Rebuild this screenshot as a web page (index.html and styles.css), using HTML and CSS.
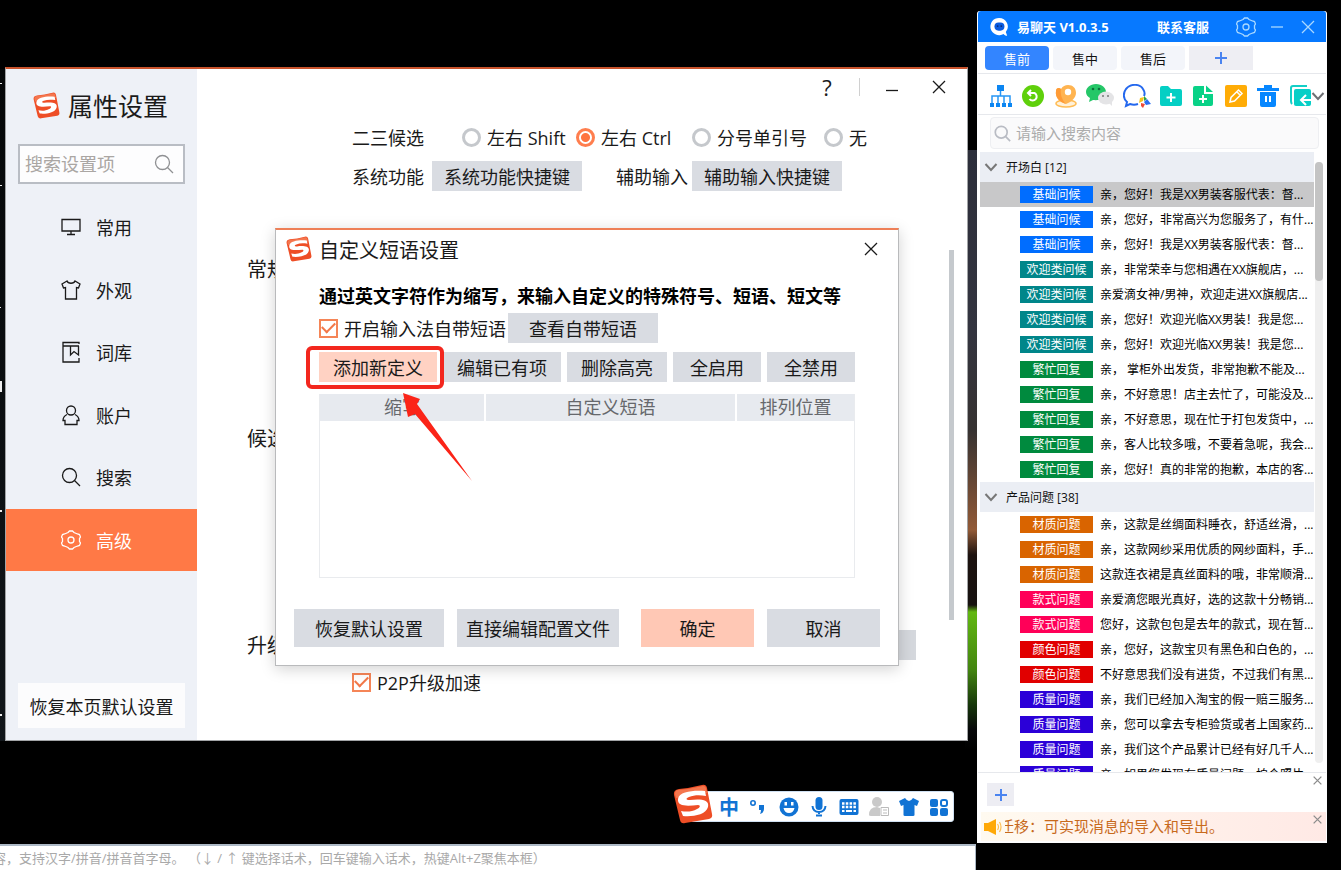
FILE: index.html
```html
<!DOCTYPE html>
<html lang="zh-CN">
<head>
<meta charset="utf-8">
<title>属性设置</title>
<link rel="stylesheet" href="styles.css">
</head>
<body>
<svg class="defs" aria-hidden="true">
  <symbol id="s-logo" viewBox="0 0 40 40">
    <path d="M6 5 Q17 4 29 1 Q33 0 34 4 L39 30 Q40 34 36 35 L12 39 Q8 40 7 36 L1 11 Q0 6 6 5Z" fill="#ee4e26"/>
    <path d="M5 6 Q17 5 30 2 Q33 2 33 5 L34 9 Q20 10 3 14 L2 10 Q2 6 5 6Z" fill="#f4764e"/>
    <path d="M32 7C22 6 6 7 5 15C4 23 15 22 25 21C28 21 27 24 24 25C19 28 13 28 8 27L10 32C19 33 33 31 35 23C37 15 26 15 17 16C12 16 13 14 16 13C21 11 27 11 33 12Z" fill="#fff"/>
  </symbol>
  <symbol id="i-search" viewBox="0 0 20 20"><circle cx="8.500" cy="8.500" r="7"/><path d="M13.500 13.500 19 19"/></symbol>
  <symbol id="i-close" viewBox="0 0 14 14"><path d="M1 1 13 13M13 1 1 13"/></symbol>
  <symbol id="i-hex" viewBox="0 0 20 20"><path d="M7 2.500 8.500 1H11.500L13 2.500 16.500 4 18.500 4.500 19.500 7 18.500 8.500V11.500L19.500 13 18.500 15.500 16.500 16 13 17.500 11.500 19H8.500L7 17.500 3.500 16 1.500 15.500.5 13 1.500 11.500V8.500L.5 7 1.500 4.500 3.500 4Z"/><circle cx="10" cy="10" r="3"/></symbol>
  <symbol id="i-plus" viewBox="0 0 14 14"><path d="M7 1V13M1 7H13"/></symbol>
  <symbol id="i-down" viewBox="0 0 14 14"><path d="M1.500 4 7 10 12.500 4"/></symbol>
</svg>

<main class="desktop">
  <div class="wallpaper-strip"></div>
  <div class="edge-marks" aria-hidden="true"><i></i><i></i><i></i><i></i><i></i><i></i></div>

  <section class="settings" aria-label="属性设置">
    <aside class="sidebar">
      <h1 class="brand"><svg class="brand-logo"><use href="#s-logo"/></svg>属性设置</h1>
      <label class="side-search">
        <input type="text" placeholder="搜索设置项" aria-label="搜索设置项">
        <svg class="line"><use href="#i-search"/></svg>
      </label>
      <nav class="side-nav">
        <button class="nav-item"><svg class="line" viewBox="0 0 20 20"><path d="M1 2.500H19V14H1ZM10 14V17.500M6 17.500H14"/></svg>常用</button>
        <button class="nav-item"><svg class="line" viewBox="0 0 20 20"><path d="M6 1 1 4 2.500 8 4.500 7.500V19H15.500V7.500L17.500 8 19 4 14 1C13 4 7 4 6 1Z"/></svg>外观</button>
        <button class="nav-item"><svg class="line" viewBox="0 0 20 20"><path d="M18 2V0.500H2V20H18V16M2 4H18M9.500 4V13L13 9.500 17.500 13V4"/></svg>词库</button>
        <button class="nav-item"><svg class="line" viewBox="0 0 20 20"><circle cx="10" cy="5.500" r="4.500"/><path d="M6 9.500C3 11 2 13 2 15.500H4V19.500H16V15.500H18C18 13 17 11 14 9.500"/></svg>账户</button>
        <button class="nav-item"><svg class="line"><use href="#i-search"/></svg>搜索</button>
        <button class="nav-item is-active"><svg class="line"><use href="#i-hex"/></svg>高级</button>
      </nav>
      <button class="restore-page">恢复本页默认设置</button>
    </aside>

    <div class="settings-main">
      <header class="window-tools">
        <button aria-label="帮助" class="help">?</button>
        <span class="tool-sep"></span>
        <button aria-label="最小化"><svg class="line icon-14" viewBox="0 0 14 14"><path d="M1 10.500H13"/></svg></button>
        <button aria-label="关闭"><svg class="line icon-14"><use href="#i-close"/></svg></button>
      </header>
      <div class="settings-body">
        <section class="group group-keys">
          <div></div>
          <div class="fields">
            <div class="radio-row" role="radiogroup" aria-label="二三候选">
              <span>二三候选</span>
              <label><input type="radio" name="cand">左右 Shift</label>
              <label><input type="radio" name="cand" checked>左右 Ctrl</label>
              <label><input type="radio" name="cand">分号单引号</label>
              <label><input type="radio" name="cand">无</label>
            </div>
            <div class="shortcut-row">
              <span>系统功能</span><button class="btn">系统功能快捷键</button>
              <span class="second">辅助输入</span><button class="btn">辅助输入快捷键</button>
            </div>
          </div>
        </section>
        <section class="group group-general"><h2>常规</h2></section>
        <section class="group group-cand"><h2>候选</h2></section>
        <section class="group">
          <h2>升级</h2>
          <div class="fields">
            <span class="covered-control"></span>
            <label class="check"><input type="checkbox" checked>P2P升级加速</label>
          </div>
        </section>
      </div>
      <span class="settings-scroll"></span>
    </div>
  </section>

  <section class="dialog" role="dialog" aria-label="自定义短语设置">
    <header class="dialog-head">
      <svg class="dialog-logo"><use href="#s-logo"/></svg>
      <h2>自定义短语设置</h2>
      <button aria-label="关闭"><svg class="line icon-14"><use href="#i-close"/></svg></button>
    </header>
    <div class="dialog-body">
      <p>通过英文字符作为缩写，来输入自定义的特殊符号、短语、短文等</p>
      <div class="enable-row">
        <label class="check"><input type="checkbox" checked>开启输入法自带短语</label>
        <button class="btn">查看自带短语</button>
      </div>
      <div class="action-row">
        <button class="btn btn-add">添加新定义</button>
        <button class="btn">编辑已有项</button>
        <button class="btn">删除高亮</button>
        <button class="btn">全启用</button>
        <button class="btn">全禁用</button>
      </div>
      <div class="table-box">
        <table>
          <thead><tr><th class="col-abbr">缩写</th><th>自定义短语</th><th class="col-pos">排列位置</th></tr></thead>
        </table>
      </div>
    </div>
    <footer class="dialog-foot">
      <button class="btn btn-wide">恢复默认设置</button>
      <button class="btn">直接编辑配置文件</button>
      <button class="btn btn-primary">确定</button>
      <button class="btn btn-short">取消</button>
    </footer>
    <span class="mark-frame"></span>
    <svg class="mark-arrow" viewBox="0 0 74 94" aria-hidden="true"><path d="M3 3 20 9 17 14 72 91 15 24 8 27Z" fill="#fb2418"/></svg>
  </section>

  <section class="chat" aria-label="易聊天">
    <header class="chat-title">
      <svg class="chat-logo" viewBox="0 0 22 22"><path d="M11 1a9.500 9.500 0 1 0 5 17.600C17 20 18 20.500 20 20.500L18.500 16.500A9.500 9.500 0 0 0 11 1Z" fill="#fff"/><rect x="6" y="6" width="11" height="9" rx="4.500" fill="#0a5be0"/><circle cx="9.500" cy="10" r="1" fill="#0b2a6b"/><circle cx="13.500" cy="10" r="1" fill="#0b2a6b"/></svg>
      <strong>易聊天 V1.0.3.5</strong>
      <a href="#">联系客服</a>
      <button aria-label="设置"><svg class="line icon-20"><use href="#i-hex"/></svg></button>
      <button aria-label="最小化"><svg class="line icon-14" viewBox="0 0 14 14"><path d="M1 7H13"/></svg></button>
      <button aria-label="关闭"><svg class="line icon-14"><use href="#i-close"/></svg></button>
    </header>
    <nav class="chat-tabs">
      <button class="is-active">售前</button><button>售中</button><button>售后</button>
      <button class="tab-add" aria-label="添加"><svg class="line icon-14"><use href="#i-plus"/></svg></button>
    </nav>
    <div class="chat-tools">
      <button aria-label="结构"><svg viewBox="0 0 24 24" fill="#0c86f2"><path d="M8 1h7v6H8zM1 19h4v4H1zM7 19h4v4H7zM13 19h4v4h-4zM19 19h4v4h-4z"/><path d="M11.500 7V12M3 19V12H21V19M9 19V12M15 19V12" fill="none" stroke="#2796f5" stroke-width="1.500"/></svg></button>
      <button aria-label="刷新"><svg viewBox="0 0 24 24"><circle cx="12" cy="12" r="11" fill="#5fd00b"/><path d="M8 9H13.500A4 4 0 1 1 8.500 15M10 6 7 9 10 12" fill="none" stroke="#fff" stroke-width="2"/></svg></button>
      <button aria-label="定位"><svg viewBox="0 0 24 24"><ellipse cx="12" cy="19.500" rx="10" ry="3.500" fill="#fff1d9" stroke="#ffbd55" stroke-width="1.500"/><path d="M14 1C19 1 22 4 22 9C22 13 18 18 12 20C5 18 1 13 2 7C2 4 5 3 7 5C9 2 11 1 14 1Z" fill="#ffb451"/><path d="M2 7C2 4 5 3 7 5C6 10 8 16 12 20C5 18 1 13 2 7Z" fill="#ff9b36"/><circle cx="14" cy="8" r="3.200" fill="#fff"/></svg></button>
      <button aria-label="微信" class="tool-wide"><svg viewBox="0 0 28 24"><path d="M10 0C4 0 0 4 0 8c0 3 2 5 4 6l-1 4 4-2c8 1 13-3 13-8 0-4-4-8-10-8Z" fill="#25c768"/><circle cx="7" cy="5" r="1.300" fill="#0b713b"/><circle cx="13" cy="5" r="1.300" fill="#0b713b"/><ellipse cx="20" cy="14" rx="8" ry="6.500" fill="#e4e4e6"/><path d="M23 19l3 3v-5Z" fill="#e4e4e6"/><circle cx="17" cy="12" r="1" fill="#777"/><circle cx="22" cy="12" r="1" fill="#777"/></svg></button>
      <button aria-label="会话" class="tool-wide"><svg viewBox="0 0 28 24"><path d="M15 20C12 21 10 21 7 20L3 22 4 18C0 15 0 9 3 5 8-1 17 0 20 5 22 8 22 10 21 12" fill="none" stroke="#2468ee" stroke-width="2"/><path d="M17 14l4-1-1 4-4 2Z" fill="#f6c21b"/><path d="M21 12l3 3-3 2Z" fill="#2aa34b"/><path d="M24 15l4 5-5 1-2-3Z" fill="#2c6ff1"/><path d="M18 19l4 1-2 4-2-2Z" fill="#ef4b37"/></svg></button>
      <button aria-label="新建文件夹"><svg viewBox="0 0 24 24"><path d="M1 4q0-2 2-2h6l3 3h9q2 0 2 2v13q0 2-2 2H3q-2 0-2-2Z" fill="#05cfc4"/><path d="M12 9V18M7.500 13.500H16.500" stroke="#fff" stroke-width="2"/></svg></button>
      <button aria-label="新建文件"><svg viewBox="0 0 24 24"><path d="M2 4q0-2 2-2h9v8h9v10q0 2-2 2H4q-2 0-2-2Z" fill="#09d287"/><path d="M15 1.500 22 8H15Z" fill="#09d287"/><path d="M12 11V19M8 15H16" stroke="#fff" stroke-width="2"/></svg></button>
      <button aria-label="编辑"><svg viewBox="0 0 24 24"><rect x="1" y="1" width="22" height="22" rx="2" fill="#ffac06"/><path d="M6 18 7 13.500 14.500 6 18 9.500 10.500 17ZM13 8 16 11" fill="none" stroke="#fff" stroke-width="1.500"/></svg></button>
      <button aria-label="删除"><svg viewBox="0 0 24 24"><path d="M8 1h8v3h7v3H1V4h7ZM4 8h16v13q0 2-2 2H6q-2 0-2-2Z" fill="#0787ff"/><path d="M10 12V18M14 12V18" stroke="#fff" stroke-width="2"/></svg></button>
      <button aria-label="导入"><svg viewBox="0 0 24 24"><path d="M3 20Q2 19 2 17V4Q2 2 4 2H18" fill="none" stroke="#14cfc7" stroke-width="2"/><path d="M5 7q0-2 2-2h13q2 0 2 2v13q0 2-2 2H7q-2 0-2-2Z" fill="#07cfc7"/><path d="M17 11 12 16 17 21M12 16H23" fill="none" stroke="#fff" stroke-width="2"/></svg></button>
      <button aria-label="更多" class="tool-more"><svg class="line icon-14"><use href="#i-down"/></svg></button>
    </div>
    <label class="chat-search">
      <svg class="line"><use href="#i-search"/></svg>
      <input type="text" placeholder="请输入搜索内容" aria-label="请输入搜索内容">
    </label>
    <div class="chat-list">
      <div class="chat-groups">
        <button class="group-head"><svg class="line icon-14"><use href="#i-down"/></svg>开场白 [12]</button>
        <ul>
          <li class="is-selected"><b class="t-blue">基础问候</b><span>亲，您好！我是XX男装客服代表：督...</span></li>
          <li><b class="t-blue">基础问候</b><span>亲，您好，非常高兴为您服务了，有什...</span></li>
          <li><b class="t-blue">基础问候</b><span>亲，您好！我是XX男装客服代表：督...</span></li>
          <li><b class="t-teal">欢迎类问候</b><span>亲，非常荣幸与您相遇在XX旗舰店，...</span></li>
          <li><b class="t-teal">欢迎类问候</b><span>亲爱滴女神/男神，欢迎走进XX旗舰店...</span></li>
          <li><b class="t-teal">欢迎类问候</b><span>亲，您好！欢迎光临XX男装！我是您...</span></li>
          <li><b class="t-teal">欢迎类问候</b><span>亲，您好！欢迎光临XX男装！我是您...</span></li>
          <li><b class="t-green">繁忙回复</b><span>亲， 掌柜外出发货，非常抱歉不能及...</span></li>
          <li><b class="t-green">繁忙回复</b><span>亲，不好意思！店主去忙了，可能没及...</span></li>
          <li><b class="t-green">繁忙回复</b><span>亲，不好意思，现在忙于打包发货中，...</span></li>
          <li><b class="t-green">繁忙回复</b><span>亲，客人比较多哦，不要着急呢，我会...</span></li>
          <li><b class="t-green">繁忙回复</b><span>亲，您好！真的非常的抱歉，本店的客...</span></li>
        </ul>
        <button class="group-head"><svg class="line icon-14"><use href="#i-down"/></svg>产品问题 [38]</button>
        <ul>
          <li><b class="t-orange">材质问题</b><span>亲，这款是丝绸面料睡衣，舒适丝滑，...</span></li>
          <li><b class="t-orange">材质问题</b><span>亲，这款网纱采用优质的网纱面料，手...</span></li>
          <li><b class="t-orange">材质问题</b><span>这款连衣裙是真丝面料的哦，非常顺滑...</span></li>
          <li><b class="t-pink">款式问题</b><span>亲爱滴您眼光真好，选的这款十分畅销...</span></li>
          <li><b class="t-pink">款式问题</b><span>您好，这款包包是去年的款式，现在暂...</span></li>
          <li><b class="t-red">颜色问题</b><span>亲，您好，这款宝贝有黑色和白色的，...</span></li>
          <li><b class="t-red">颜色问题</b><span>不好意思我们没有进货，不过我们有黑...</span></li>
          <li><b class="t-indigo">质量问题</b><span>亲，我们已经加入淘宝的假一赔三服务...</span></li>
          <li><b class="t-indigo">质量问题</b><span>亲，您可以拿去专柜验货或者上国家药...</span></li>
          <li><b class="t-indigo">质量问题</b><span>亲，我们这个产品累计已经有好几千人...</span></li>
          <li><b class="t-indigo">质量问题</b><span>亲，如果您发现有质量问题，拍个照片...</span></li>
        </ul>
      </div>
      <div class="chat-track"><span></span></div>
    </div>
    <div class="chat-add">
      <button class="add-btn" aria-label="添加"><svg class="line icon-14"><use href="#i-plus"/></svg></button>
      <button class="mini-close" aria-label="关闭"><svg class="line"><use href="#i-close"/></svg></button>
    </div>
    <div class="chat-notice">
      <svg class="horn" viewBox="0 0 18 18"><path d="M0 5H4L12 1V17L4 13H0Z" fill="#ffa908"/><path d="M13.500 6Q15.500 9 13.500 12M15.500 4Q18.500 9 15.500 14" fill="none" stroke="#ffbf54" stroke-width="1.200"/></svg>
      <div class="marquee"><span>迁移：可实现消息的导入和导出。</span></div>
      <button class="mini-close" aria-label="关闭"><svg class="line"><use href="#i-close"/></svg></button>
    </div>
  </section>

  <div class="ime">
    <svg class="ime-logo"><use href="#s-logo"/></svg>
    <button class="ime-cn">中</button>
    <button aria-label="标点"><svg viewBox="0 0 20 20"><circle cx="4" cy="6" r="2.200" fill="none" stroke="#1173d4" stroke-width="1.600"/><path d="M10 8h5v4q0 4-4 5 1-2 1-4h-2Z" fill="#1173d4"/></svg></button>
    <button aria-label="表情"><svg viewBox="0 0 20 20"><circle cx="10" cy="10" r="9.500" fill="#1173d4"/><path d="M5.500 5h2.500v3.500H5.500zM12 5h2.500v3.500H12zM4.500 11h11q-1 5-5.500 5t-5.500-5Z" fill="#fff"/></svg></button>
    <button aria-label="语音"><svg viewBox="0 0 20 20"><rect x="6.500" y="0" width="7" height="13" rx="3.500" fill="#1173d4"/><path d="M3.500 9Q4 15 10 15T16.500 9M10 15V17M7 18.500H13" fill="none" stroke="#1173d4" stroke-width="2"/></svg></button>
    <button aria-label="键盘"><svg viewBox="0 0 20 20"><rect x="0.500" y="2" width="19" height="16" rx="2" fill="#1173d4"/><path d="M3 6.500H17M3 10H17" stroke="#fff" stroke-width="2.500" stroke-dasharray="2.500 1.300"/><path d="M3 14H5.500M7 14H13M14.500 14H17" stroke="#fff" stroke-width="2"/></svg></button>
    <button aria-label="账号"><svg viewBox="0 0 20 20" fill="#c9c9c9"><circle cx="8" cy="5" r="5"/><path d="M0 18Q0 10 8 10L11 11V19H2Q0 19 0 18Z"/><path d="M12 10.500H19.500V18.500H12ZM14 13H18M14 16H18" fill="#fff" stroke="#bbb"/></svg></button>
    <button aria-label="皮肤"><svg viewBox="0 0 20 20"><path d="M6 1 0 4 2 9 4.500 8V18Q4.500 19 6 19H14Q15.500 19 15.500 18V8L18 9 20 4 14 1Q12 4 10 4T6 1Z" fill="#1173d4"/></svg></button>
    <button aria-label="工具箱"><svg viewBox="0 0 20 20" fill="#1173d4"><rect x="1" y="2" width="8" height="8" rx="2"/><rect x="1" y="11" width="8" height="8" rx="2"/><rect x="11" y="11" width="8" height="8" rx="2"/><rect x="12" y="3" width="6" height="6" rx="2" fill="none" stroke="#1173d4" stroke-width="2"/></svg></button>
  </div>

  <div class="hint-bar">
    <input type="text" aria-label="搜索话术" placeholder="容，支持汉字/拼音/拼音首字母。 （↓ / ↑ 键选择话术，回车键输入话术，热键Alt+Z聚焦本框）">
  </div>
</main>
</body>
</html>
```
FILE: styles.css
```css
* { box-sizing: border-box; }

body {
  margin: 0;
  background: #000;
  color: #1a1a1a;
  font-family: "Open Sans", "Noto Sans CJK SC", sans-serif;
  font-size: 18px;
}

h1, h2, p, ul { margin: 0; padding: 0; font-weight: 400; }

button {
  display: flex;
  align-items: center;
  justify-content: center;
  padding: 0;
  border: 0;
  background: none;
  color: inherit;
  font: inherit;
  white-space: nowrap;
}

input { min-width: 0; font: inherit; color: inherit; }
input[type="text"] { border: 0; padding: 0; background: none; outline: 0; }

.defs { display: none; }
.line { fill: none; stroke: currentColor; stroke-width: 1.3; flex: none; }
.icon-14 { width: 14px; height: 14px; }
.icon-20 { width: 20px; height: 20px; }

.desktop {
  position: relative;
  height: 100vh;
  min-height: 870px;
  overflow: hidden;
  background: #000;
}

.wallpaper-strip {
  position: absolute;
  top: 150px;
  right: 364px;
  width: 12px;
  height: 600px;
  background: linear-gradient(#2c2e3a 0, #33343f 180px, #363231 280px, #925a37 380px, #1c120f 405px, #171210 455px, #62b811 462px, #438510 520px, #16360a 555px, #07080a 580px, #000 600px);
}

.edge-marks {
  position: absolute;
  top: 69px;
  left: 0;
  width: 5px;
  height: 672px;
  background: linear-gradient(#050708, #11161a);
}
.edge-marks i { position: absolute; left: 0; top: 14px; width: 2px; height: 1px; background: #eee; }
.edge-marks i:nth-child(2) { top: 116px; }
.edge-marks i:nth-child(3) { top: 238px; width: 1px; }
.edge-marks i:nth-child(4) { top: 312px; height: 11px; }
.edge-marks i:nth-child(5) { top: 441px; height: 2px; }
.edge-marks i:nth-child(6) { top: 645px; height: 2px; }

/* settings window */
.settings {
  position: absolute;
  top: 67px;
  left: 5px;
  right: 373px;
  display: flex;
  min-height: 674px;
  border: 1px solid #a2a4a6;
  border-top: 2px solid #c9532c;
  background: #fff;
}

.sidebar {
  display: flex;
  flex-direction: column;
  width: 191px;
  padding: 16px 0 12px;
  background: #eef1f7;
}
.brand {
  display: flex;
  align-items: center;
  gap: 8px;
  height: 40px;
  margin-left: 27px;
  font-size: 25px;
}
.brand-logo { width: 27px; height: 27px; }

.side-search {
  display: flex;
  align-items: center;
  height: 40px;
  margin: 19px 12px 12px;
  padding: 0 9px 0 5px;
  border: 2px solid #b9bdc4;
  background: #fdfdfe;
  color: #8f9093;
}
.side-search input { flex: 1; width: 0; }
.side-search input::placeholder { color: #aaa6a3; }
.side-search svg { width: 20px; height: 20px; }

.side-nav { display: flex; flex-direction: column; height: 375px; }
.nav-item {
  flex: 1;
  justify-content: flex-start;
  gap: 15px;
  padding-left: 55px;
}
.nav-item svg { width: 20px; height: 20px; overflow: visible; }
.nav-item.is-active { background: #ff7946; color: #fff; }

.restore-page { height: 45px; margin: auto 12px 0; background: #fcfcfd; }

.settings-main { position: relative; flex: 1; min-width: 0; }
.window-tools {
  display: flex;
  align-items: center;
  justify-content: flex-end;
  height: 36px;
  padding-right: 18px;
}
.window-tools button { width: 20px; margin-left: 27px; }
.window-tools .help { font-size: 22px; margin: 0; }
.window-tools .tool-sep { width: 1px; height: 18px; margin: 0 -5px 0 22px; background: #d0d0d0; }

.settings-body { padding: 17px 0 0 50px; }
.group { display: grid; grid-template-columns: 105px 1fr; }
.group h2 { font-size: 20px; line-height: 32px; }
.group-keys { min-height: 132px; }
.group-general { min-height: 169px; }
.group-cand { min-height: 207px; }
.fields { display: flex; flex-direction: column; align-items: flex-start; gap: 9px; white-space: nowrap; }

.radio-row {
  display: grid;
  grid-template-columns: 110px 114px 116px 132px auto;
  align-items: center;
  height: 30px;
}
.radio-row label, .check { display: flex; align-items: center; gap: 6px; }
input[type="radio"] {
  appearance: none;
  flex: none;
  width: 19px;
  height: 19px;
  margin: 0;
  border: 3px solid #c5c8cc;
  border-radius: 50%;
  background: #fff;
}
input[type="radio"]:checked {
  border-color: #ff7e4e;
  background: radial-gradient(circle, #ff7440 0 4px, #fff 5px);
}
input[type="checkbox"] {
  appearance: none;
  flex: none;
  display: grid;
  place-items: center;
  width: 19px;
  height: 19px;
  margin: 0;
  border: 2px solid #f58557;
  background: #fff;
}
input[type="checkbox"]::before {
  content: "";
  width: 11px;
  height: 6px;
  margin-bottom: 4px;
  border: solid #f27849;
  border-width: 0 0 2px 2px;
  transform: rotate(-45deg);
}

.btn { height: 30px; padding: 0 14px; background: #d9dce2; }
.shortcut-row { display: flex; align-items: center; }
.shortcut-row .btn { width: 150px; padding: 0; margin-left: 8px; }
.shortcut-row .second { margin-left: 34px; }
.shortcut-row .second + .btn { margin-left: 4px; }

.covered-control { width: 150px; height: 30px; margin-left: 414px; background: #d5d8dd; }
.group .check { height: 26px; }
.settings-scroll {
  position: absolute;
  top: 181px;
  right: 13px;
  width: 5px;
  height: 370px;
  background: #c5c9cd;
}

/* phrase dialog */
.dialog {
  position: absolute;
  top: 228px;
  left: 275px;
  width: 624px;
  border: 1px solid #b9babc;
  border-top: 2px solid #ee7f57;
  background: #fff;
  box-shadow: 0 3px 14px rgba(0, 0, 0, 0.18);
}
.dialog-head { display: flex; align-items: center; gap: 7px; height: 38px; padding: 0 20px 0 10px; }
.dialog-head h2 { flex: 1; font-size: 20px; }
.dialog-logo { width: 26px; height: 26px; }
.dialog-body { padding: 16px 43px 31px; }
.dialog-body p { margin-bottom: 5px; font-weight: 700; line-height: 24px; color: #000; white-space: nowrap; }
.enable-row { display: flex; gap: 2px; margin-bottom: 9px; }
.enable-row .btn { width: 150px; }
.action-row { display: flex; gap: 6px; margin-bottom: 12px; }
.action-row .btn { min-width: 88px; }
.btn-add { background: #ffd2c3; }

.table-box { height: 184px; border: 1px solid #e9ebee; border-top: 0; }
.table-box table { width: 100%; border-collapse: collapse; table-layout: fixed; }
.table-box th {
  height: 27px;
  padding: 0;
  border-left: 2px solid #fff;
  background: #e7eaef;
  color: #66686c;
  font-weight: 400;
  line-height: 27px;
}
.table-box th:first-child { border-left: 0; }
.table-box .col-abbr { width: 165px; }
.table-box .col-pos { width: 118px; }

.dialog-foot { display: flex; gap: 13px; padding: 0 18px 18px 18px; }
.dialog-foot .btn { height: 38px; padding: 0 9px; }
.dialog-foot .btn-wide { width: 150px; }
.dialog-foot .btn-short { width: 113px; }
.dialog-foot .btn-primary { width: 113px; margin-left: auto; background: #ffc8b5; }

.mark-frame {
  position: absolute;
  top: 116px;
  left: 30px;
  width: 138px;
  height: 43px;
  border: 4px solid #f3271e;
  border-radius: 6px;
}
.mark-arrow { position: absolute; top: 160px; left: 124px; width: 74px; height: 94px; }

/* chat side panel */
.chat {
  position: absolute;
  top: 11px;
  right: 14px;
  bottom: 27px;
  display: flex;
  flex-direction: column;
  width: 350px;
  border: solid #fdfdfe;
  border-width: 0 1px 2px;
  border-radius: 3px 3px 0 0;
  background: #fff;
  font-size: 12px;
}
.chat-title {
  display: flex;
  flex: none;
  align-items: center;
  height: 31px;
  padding: 0 11px;
  border-radius: 3px 3px 0 0;
  background: #0779ff;
  color: #fff;
  font-size: 13px;
}
.chat-logo { width: 20px; height: 20px; margin-right: 8px; }
.chat-title strong { flex: 1; font-size: 13px; }
.chat-title a { margin-right: 27px; color: #fff; font-weight: 700; text-decoration: none; }
.chat-title button { color: #a9d8ff; }
.chat-title button + button { margin-left: 14px; }
.chat-title button:last-child { margin-left: 17px; }

.chat-tabs {
  display: flex;
  flex: none;
  gap: 4px;
  padding: 4px 7px 3px;
  border-bottom: 1px solid #e6e8ec;
}
.chat-tabs button { width: 64px; height: 24px; border-radius: 4px; background: #f3f5fa; color: #111; font-size: 13px; }
.chat-tabs .is-active { background: #3385ff; color: #fff; }
.chat-tabs .tab-add { border-radius: 0; background: #eeeef3; }
.tab-add svg, .add-btn svg { color: #4a84f0; stroke-width: 2; }

.chat-tools {
  display: flex;
  flex: none;
  align-items: center;
  justify-content: space-between;
  height: 41px;
  padding: 3px 1px 0 11px;
  border-bottom: 1px solid #e6e8ec;
}
.chat-tools svg { width: 24px; height: 24px; }
.chat-tools .tool-wide svg { width: 28px; }
.chat-tools .tool-more { margin-left: -10px; color: #6d6f73; }
.chat-tools .tool-more svg { width: 14px; height: 14px; stroke-width: 2; }

.chat-search {
  display: flex;
  flex: none;
  align-items: center;
  gap: 5px;
  height: 32px;
  margin: 2px 7px 3px 12px;
  padding: 0 3px;
  border: 1px solid #eeeff2;
  border-radius: 4px;
  background: #fafafb;
  color: #b9bcc4;
  font-size: 15px;
}
.chat-search svg { width: 17px; height: 17px; stroke-width: 2; }
.chat-search input { flex: 1; }
.chat-search input::placeholder { color: #acacac; }

.chat-list { display: flex; flex: 1; min-height: 0; overflow: hidden; padding: 0 3px 0 2px; }
.chat-groups { flex: 1; min-width: 0; }
.group-head {
  justify-content: flex-start;
  gap: 8px;
  width: 100%;
  height: 30px;
  padding-left: 4px;
  background: #ebeef4;
  color: #111;
}
.group-head svg { color: #777; stroke-width: 2; }
.chat-groups ul { list-style: none; }
.chat-groups li { display: flex; align-items: center; gap: 7px; height: 25px; padding-left: 40px; }
.chat-groups li.is-selected { background: #c8c8c9; }
.chat-groups b {
  flex: none;
  width: 73px;
  height: 17px;
  color: #fff;
  font-weight: 400;
  line-height: 17px;
  text-align: center;
}
.chat-groups li span { overflow: hidden; color: #000; line-height: 20px; white-space: nowrap; }
.t-blue { background: #006dff; }
.t-teal { background: #00868a; }
.t-green { background: #008a3e; }
.t-orange { background: #d96400; }
.t-pink { background: #ff0058; }
.t-red { background: #e10000; }
.t-indigo { background: #2b00d8; }

.chat-track { width: 8px; margin: 10px 0 9px 1px; border-radius: 4px; background: #efefef; }
.chat-track span { display: block; height: 119px; border-radius: 4px; background: #c4c4c4; }

.chat-add {
  display: flex;
  flex: none;
  align-items: flex-start;
  justify-content: space-between;
  height: 40px;
  padding-left: 9px;
  border-top: 1px solid #e6e8ec;
}
.add-btn { width: 27px; height: 23px; margin-top: 10px; background: #ededf3; }
.mini-close { margin: 3px 4px 0 0; color: #8b8b8b; }
.mini-close svg { width: 9px; height: 9px; stroke-width: 2; }

.chat-notice {
  display: flex;
  flex: none;
  align-items: flex-start;
  height: 29px;
  margin-left: 3px;
  padding-left: 3px;
  background: linear-gradient(90deg, #fffaf0, #ffe9e5);
  color: #c86a1c;
  font-size: 15px;
  line-height: 29px;
}
.horn { flex: none; width: 18px; height: 18px; margin: 6px 3px 0 0; }
.marquee { display: flex; flex: 1; overflow: hidden; }
.marquee span { margin-left: -6px; white-space: nowrap; }

/* input method bar */
.ime {
  position: absolute;
  right: 387px;
  bottom: 48px;
  display: flex;
  align-items: center;
  justify-content: space-between;
  width: 264px;
  height: 31px;
  padding: 0 4px 0 28px;
  border: 1px solid #cfe0f2;
  border-radius: 3px;
  background: #fff;
}
.ime-logo { position: absolute; left: -18px; bottom: -3px; width: 40px; height: 40px; }
.ime button, .ime button svg { width: 20px; height: 20px; }
.ime .ime-cn { color: #1173d4; font-size: 20px; font-weight: 700; }

.hint-bar {
  position: absolute;
  right: 365px;
  bottom: 0;
  left: 0;
  height: 26px;
  overflow: hidden;
  border: 1px solid #adb9c6;
  border-width: 2px 1px 0 0;
  background: #fff;
}
.hint-bar input { display: block; width: 100%; height: 24px; margin-left: -7px; font-size: 13px; }
.hint-bar input::placeholder { color: #a9a9a9; }
```
